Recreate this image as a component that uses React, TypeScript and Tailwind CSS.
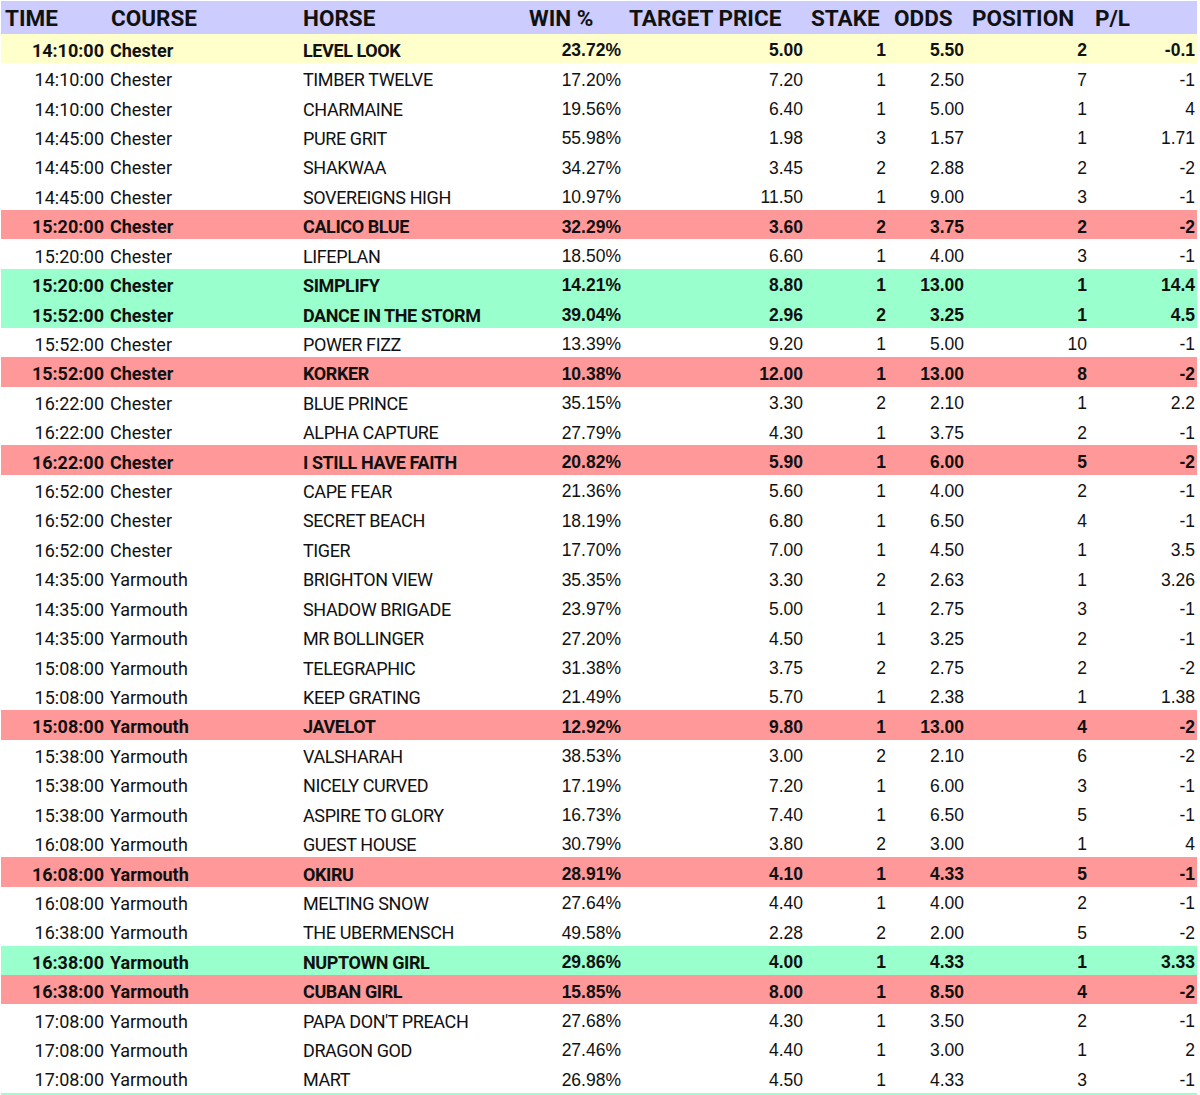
import React from "react"

type Hl = "" | "y" | "r" | "g"

// time, course, horse, win %, target price, stake, odds, position, p/l, highlight
const ROWS: [string, string, string, string, string, string, string, string, string, Hl][] = [
  ["14:10:00", "Chester", "LEVEL LOOK", "23.72%", "5.00", "1", "5.50", "2", "-0.1", "y"],
  ["14:10:00", "Chester", "TIMBER TWELVE", "17.20%", "7.20", "1", "2.50", "7", "-1", ""],
  ["14:10:00", "Chester", "CHARMAINE", "19.56%", "6.40", "1", "5.00", "1", "4", ""],
  ["14:45:00", "Chester", "PURE GRIT", "55.98%", "1.98", "3", "1.57", "1", "1.71", ""],
  ["14:45:00", "Chester", "SHAKWAA", "34.27%", "3.45", "2", "2.88", "2", "-2", ""],
  ["14:45:00", "Chester", "SOVEREIGNS HIGH", "10.97%", "11.50", "1", "9.00", "3", "-1", ""],
  ["15:20:00", "Chester", "CALICO BLUE", "32.29%", "3.60", "2", "3.75", "2", "-2", "r"],
  ["15:20:00", "Chester", "LIFEPLAN", "18.50%", "6.60", "1", "4.00", "3", "-1", ""],
  ["15:20:00", "Chester", "SIMPLIFY", "14.21%", "8.80", "1", "13.00", "1", "14.4", "g"],
  ["15:52:00", "Chester", "DANCE IN THE STORM", "39.04%", "2.96", "2", "3.25", "1", "4.5", "g"],
  ["15:52:00", "Chester", "POWER FIZZ", "13.39%", "9.20", "1", "5.00", "10", "-1", ""],
  ["15:52:00", "Chester", "KORKER", "10.38%", "12.00", "1", "13.00", "8", "-2", "r"],
  ["16:22:00", "Chester", "BLUE PRINCE", "35.15%", "3.30", "2", "2.10", "1", "2.2", ""],
  ["16:22:00", "Chester", "ALPHA CAPTURE", "27.79%", "4.30", "1", "3.75", "2", "-1", ""],
  ["16:22:00", "Chester", "I STILL HAVE FAITH", "20.82%", "5.90", "1", "6.00", "5", "-2", "r"],
  ["16:52:00", "Chester", "CAPE FEAR", "21.36%", "5.60", "1", "4.00", "2", "-1", ""],
  ["16:52:00", "Chester", "SECRET BEACH", "18.19%", "6.80", "1", "6.50", "4", "-1", ""],
  ["16:52:00", "Chester", "TIGER", "17.70%", "7.00", "1", "4.50", "1", "3.5", ""],
  ["14:35:00", "Yarmouth", "BRIGHTON VIEW", "35.35%", "3.30", "2", "2.63", "1", "3.26", ""],
  ["14:35:00", "Yarmouth", "SHADOW BRIGADE", "23.97%", "5.00", "1", "2.75", "3", "-1", ""],
  ["14:35:00", "Yarmouth", "MR BOLLINGER", "27.20%", "4.50", "1", "3.25", "2", "-1", ""],
  ["15:08:00", "Yarmouth", "TELEGRAPHIC", "31.38%", "3.75", "2", "2.75", "2", "-2", ""],
  ["15:08:00", "Yarmouth", "KEEP GRATING", "21.49%", "5.70", "1", "2.38", "1", "1.38", ""],
  ["15:08:00", "Yarmouth", "JAVELOT", "12.92%", "9.80", "1", "13.00", "4", "-2", "r"],
  ["15:38:00", "Yarmouth", "VALSHARAH", "38.53%", "3.00", "2", "2.10", "6", "-2", ""],
  ["15:38:00", "Yarmouth", "NICELY CURVED", "17.19%", "7.20", "1", "6.00", "3", "-1", ""],
  ["15:38:00", "Yarmouth", "ASPIRE TO GLORY", "16.73%", "7.40", "1", "6.50", "5", "-1", ""],
  ["16:08:00", "Yarmouth", "GUEST HOUSE", "30.79%", "3.80", "2", "3.00", "1", "4", ""],
  ["16:08:00", "Yarmouth", "OKIRU", "28.91%", "4.10", "1", "4.33", "5", "-1", "r"],
  ["16:08:00", "Yarmouth", "MELTING SNOW", "27.64%", "4.40", "1", "4.00", "2", "-1", ""],
  ["16:38:00", "Yarmouth", "THE UBERMENSCH", "49.58%", "2.28", "2", "2.00", "5", "-2", ""],
  ["16:38:00", "Yarmouth", "NUPTOWN GIRL", "29.86%", "4.00", "1", "4.33", "1", "3.33", "g"],
  ["16:38:00", "Yarmouth", "CUBAN GIRL", "15.85%", "8.00", "1", "8.50", "4", "-2", "r"],
  ["17:08:00", "Yarmouth", "PAPA DON'T PREACH", "27.68%", "4.30", "1", "3.50", "2", "-1", ""],
  ["17:08:00", "Yarmouth", "DRAGON GOD", "27.46%", "4.40", "1", "3.00", "1", "2", ""],
  ["17:08:00", "Yarmouth", "MART", "26.98%", "4.50", "1", "4.33", "3", "-1", ""],
]

const BG: Record<Hl, string> = {
  "": "bg-white",
  y: "bg-[#ffffcc]",
  r: "bg-[#ff9999]",
  g: "bg-[#99ffcc]",
}

function Row({ r }: { r: (typeof ROWS)[number] }) {
  const [time, course, horse, win, target, stake, odds, pos, pl, hl] = r
  const bold = hl !== "" ? "font-bold" : "font-normal"
  return (
    <div className={`flex h-[29.43px] items-center pt-[4px] text-[#111] ${BG[hl]} ${bold}`}>
      <div className="w-[106px] pr-[3px] text-right font-['Roboto',sans-serif] text-[18px]">{time}</div>
      <div className="w-[193px] pl-[3px] font-['Roboto',sans-serif] text-[18px]">{course}</div>
      <div className="w-[225px] pl-[3px] font-['Roboto',sans-serif] text-[18px] tracking-[-0.4px] whitespace-nowrap">{horse}</div>
      <div className="w-[100px] pr-[4px] text-right font-['Liberation_Sans',sans-serif] text-[17.5px]">{win}</div>
      <div className="w-[182px] pr-[4px] text-right font-['Liberation_Sans',sans-serif] text-[17.5px]">{target}</div>
      <div className="w-[83px] pr-[4px] text-right font-['Liberation_Sans',sans-serif] text-[17.5px]">{stake}</div>
      <div className="w-[78px] pr-[4px] text-right font-['Liberation_Sans',sans-serif] text-[17.5px]">{odds}</div>
      <div className="w-[123px] pr-[4px] text-right font-['Liberation_Sans',sans-serif] text-[17.5px]">{pos}</div>
      <div className="w-[105px] pr-[1px] text-right font-['Liberation_Sans',sans-serif] text-[17.5px]">{pl}</div>
    </div>
  )
}

export default function App() {
  return (
    <div className="h-[1095px] w-[1200px] overflow-hidden bg-white pl-[1px] pt-[1px]">
      <div className="w-[1196px]">
        {/* Header */}
        <div className="flex h-[32.5px] items-center bg-[#ccccff] pt-[4px] font-['Roboto',sans-serif] text-[22.5px] font-bold text-[#111]">
          <div className="w-[106px] pl-[4px]">TIME</div>
          <div className="w-[193px] pl-[4px]">COURSE</div>
          <div className="w-[225px] pl-[3px]">HORSE</div>
          <div className="w-[100px] pl-[4px]">WIN %</div>
          <div className="w-[182px] pl-[4px]">TARGET PRICE</div>
          <div className="w-[83px] pl-[4px]">STAKE</div>
          <div className="w-[78px] pl-[4px]">ODDS</div>
          <div className="w-[123px] pl-[4px]">POSITION</div>
          <div className="w-[105px] pl-[4px]">P/L</div>
        </div>

        {ROWS.map((r, i) => (
          <Row key={i} r={r} />
        ))}

        {/* next row peeking in at the bottom */}
        <div className="h-[29.43px] bg-[#99ffcc]" />
      </div>
    </div>
  )
}
